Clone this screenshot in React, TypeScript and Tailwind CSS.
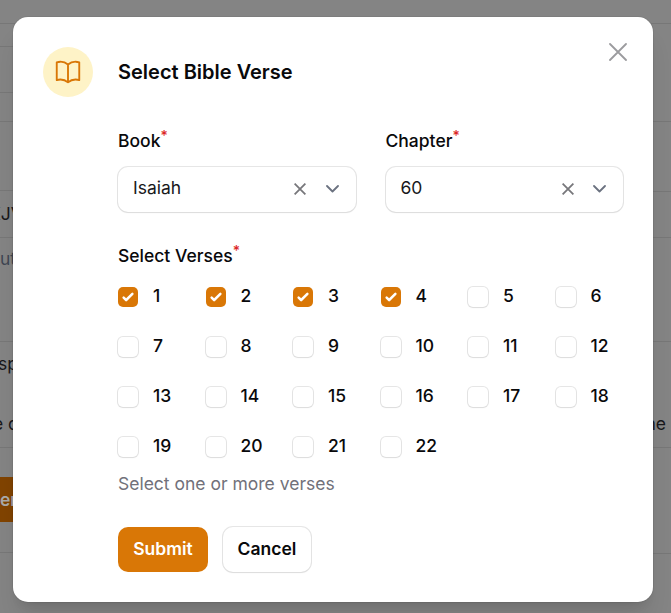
import React from "react";

const checked = [1, 2, 3, 4];
const verses = Array.from({ length: 22 }, (_, i) => i + 1);

function Label({ children }: { children: React.ReactNode }) {
  return (
    <div className="flex h-[30px] items-center text-[17.5px] font-medium leading-[30px] text-[#09090b]">
      <span>{children}</span>
      <span className="-mt-[11px] text-[14px] font-medium leading-none text-[#dc2626]">*</span>
    </div>
  );
}

function SelectField({ label, value }: { label: string; value: string }) {
  return (
    <div>
      <Label>{label}</Label>
      <div className="mt-[11px] flex h-[45px] items-center rounded-[10px] bg-white pl-[15px] pr-[15px] shadow-xs ring-1 ring-[#09090b]/10">
        <span className="-mt-[3px] flex-1 text-[17.5px] text-[#18181b]">{value}</span>
        <svg className="-mt-[1px] mr-[19.5px] size-3" viewBox="0 0 12 12" fill="none" stroke="#77777b" strokeWidth="1.8">
          <path d="M.6.6l10.8 10.8M11.4.6.6 11.4" />
        </svg>
        <svg className="-mt-[1px] mr-[2px] h-2 w-[13px]" viewBox="0 0 13 8" fill="none" stroke="#6b7280" strokeWidth="1.8" strokeLinecap="round" strokeLinejoin="round">
          <path d="M1 1l5.5 5.5L12 1" />
        </svg>
      </div>
    </div>
  );
}

function Verse({ n }: { n: number }) {
  return (
    <div className="flex h-[25px] items-center gap-[15px]">
      {checked.includes(n) ? (
        <span className="mt-[1px] flex size-5 items-center justify-center rounded-[5px] bg-[#d97706]">
          <svg className="size-5" viewBox="0 0 16 16" fill="white">
            <path d="M12.207 4.793a1 1 0 010 1.414l-5 5a1 1 0 01-1.414 0l-2-2a1 1 0 011.414-1.414L6.5 9.086l4.293-4.293a1 1 0 011.414 0z" />
          </svg>
        </span>
      ) : (
        <span className="mt-[1px] size-5 rounded-[5px] bg-white shadow-xs ring-1 ring-[#09090b]/10" />
      )}
      <span className="-mt-[2px] text-[17.5px] font-medium leading-[25px] text-[#09090b]">{n}</span>
    </div>
  );
}

const line = "border-b border-[#777777]";

function Backdrop() {
  return (
    <div className="flex h-full justify-between text-[17.5px] leading-[24px] text-[#18181b]">
      <div className="w-[15px] overflow-hidden whitespace-nowrap">
        <div className={`h-6 ${line}`} />
        <div className={`h-[23px] ${line}`} />
        <div className={`h-[46px] ${line}`} />
        <div className={`h-[29px] ${line}`} />
        <div className={`h-[69px] ${line}`} />
        <div className={`flex h-[47px] items-center ${line}`}><span className="-ml-[11px]">KJV</span></div>
        <div className={`h-[104px] pt-[9px] text-[#3f4652] ${line}`}><span>ut</span></div>
        <div className={`h-[106px] pt-[10px] ${line}`}>
          <div className="-ml-[2px]">sp</div>
          <div className="-ml-[7px] mt-9">e o</div>
        </div>
        <div className="mt-[29px] flex h-[45px] items-center bg-[#804300] font-semibold text-[#aaa]">er</div>
        <div className={`h-[31px] ${line}`} />
      </div>
      <div className="w-5 overflow-hidden">
        <div className={`h-6 ${line}`} />
        <div className={`h-[98px] ${line}`} />
        <div className={`h-[70px] ${line}`} />
        <div className={`h-[46px] ${line}`} />
        <div className={`h-[104px] ${line}`} />
        <div className={`flex h-[106px] justify-end pr-[5px] pt-[70px] ${line}`}>he</div>
        <div className={`h-[106px] ${line}`} />
      </div>
    </div>
  );
}

export default function App() {
  return (
    <div className="relative h-[613px] w-[671px] overflow-hidden bg-[#848484] font-['Inter',sans-serif]">
      <Backdrop />
      <div className="absolute left-[13px] top-[17px] flex h-[585px] w-[640px] flex-col rounded-[15px] bg-white px-[30px] pt-[30px] shadow-xl ring-1 ring-black/5">
        <button className="absolute right-[26px] top-[26px] text-[#9b9b9e]" aria-label="Close">
          <svg className="size-[18px]" viewBox="0 0 18 18" fill="none" stroke="currentColor" strokeWidth="1.8" strokeLinecap="round">
            <path d="M1 1l16 16M17 1L1 17" />
          </svg>
        </button>
        <header className="flex items-center gap-[25px]">
          <div className="flex size-[50px] items-center justify-center rounded-full bg-[#fef3c7] text-[#d97706]">
            <svg className="size-[30px]" viewBox="0 0 24 24" fill="none" stroke="currentColor" strokeWidth="1.5" strokeLinecap="round" strokeLinejoin="round">
              <path d="M12 6.042A8.967 8.967 0 0 0 6 3.75c-1.052 0-2.062.18-3 .512v14.25A8.987 8.987 0 0 1 6 18c2.305 0 4.408.867 6 2.292m0-14.25a8.966 8.966 0 0 1 6-2.292c1.052 0 2.062.18 3 .512v14.25A8.987 8.987 0 0 0 18 18a8.967 8.967 0 0 0-6 2.292m0-14.25v14.25" />
            </svg>
          </div>
          <h2 className="text-[20px] font-semibold text-[#09090b]">Select Bible Verse</h2>
        </header>
        <div className="ml-[75px] mt-[29px]">
          <div className="grid grid-cols-2 gap-[30px]">
            <SelectField label="Book" value="Isaiah" />
            <SelectField label="Chapter" value="60" />
          </div>
          <div className="mt-[29px]"><Label>Select Verses</Label></div>
          <div className="mt-[13px] grid grid-cols-6 gap-x-5 gap-y-[25px]">
            {verses.map((n) => <Verse key={n} n={n} />)}
          </div>
          <p className="mt-[12px] text-[17.5px] leading-[25px] text-[#71717a]">Select one or more verses</p>
          <div className="mt-[31px] flex gap-[15px] text-[17.5px] font-semibold">
            <button className="h-[45px] w-[90px] rounded-[10px] bg-[#d97706] text-white">Submit</button>
            <button className="h-[45px] w-[88px] rounded-[10px] bg-white text-[#09090b] shadow-xs ring-1 ring-[#09090b]/10">Cancel</button>
          </div>
        </div>
      </div>
    </div>
  );
}
